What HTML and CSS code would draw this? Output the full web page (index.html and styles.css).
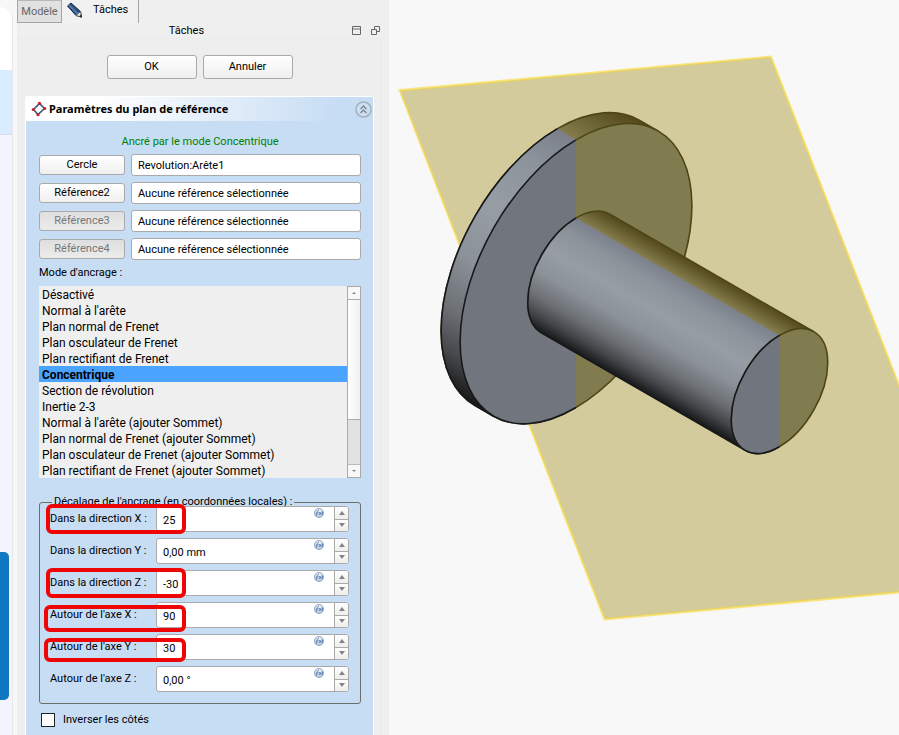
FILE: index.html
```html
<!DOCTYPE html>
<html lang="fr">
<head>
<meta charset="utf-8">
<title>Tâches</title>
<link rel="stylesheet" href="styles.css">
</head>
<body>
<svg class="defs" width="0" height="0" aria-hidden="true">
  <defs>
    <radialGradient id="fxFill" cx=".5" cy=".3" r=".7"><stop offset="0" stop-color="#eef3f8"/><stop offset="1" stop-color="#b4c6da"/></radialGradient>
    <symbol id="fx" viewBox="0 0 10 10">
      <circle cx="5" cy="5" r="4.5" fill="url(#fxFill)" stroke="#8fa5bf" stroke-width="1"/>
      <path d="M2 8 3.6 3.2Q4 2.2 4.8 2.6M2.6 5H4.4M5 4 7.4 7M7.4 4 5 7M8.3 3.5V7" fill="none" stroke="#4a78ae" stroke-width=".9"/>
    </symbol>
  </defs>
</svg>
<div class="app">
  <aside class="backdrop">
    <div class="backdrop-page"><div class="band"></div></div>
    <div class="backdrop-thumb"></div>
  </aside>

  <section class="dock">
    <nav class="tabs">
      <button class="tab" type="button">Modèle</button>
      <button class="tab active" type="button">
        <svg width="18" height="17" viewBox="0 0 18 17" aria-hidden="true">
          <path d="M1.5 4 5 1 14.5 9.5 15.5 15 10 13.500Z" fill="#2f4f7d" stroke="#16294a" stroke-width="1"/>
          <path d="M3 3 12 12" stroke="#5c80b4" stroke-width="1.500"/>
          <path d="M10 13.500 14.500 9.500 15.500 15Z" fill="#e9e4da" stroke="#4b5564" stroke-width=".7"/>
          <path d="M13.300 14.400 15 12.500 15.800 15.400Z" fill="#111"/>
        </svg>
        Tâches
      </button>
    </nav>
    <header class="dock-title">
      <h1>Tâches</h1>
      <div class="dock-tools">
        <button type="button" aria-label="Réduire"><svg width="9" height="9" viewBox="0 0 9 9"><path d="M.5.5h8v8h-8zM0 3h9" fill="none" stroke="#666"/></svg></button>
        <button type="button" aria-label="Détacher"><svg width="9" height="9" viewBox="0 0 9 9"><path d="M3.500 3V.5h5v5H6M.5 3.500h5v5h-5z" fill="none" stroke="#666"/></svg></button>
      </div>
    </header>

    <div class="dock-body">
      <div class="actions">
        <button class="btn" type="button">OK</button>
        <button class="btn" type="button">Annuler</button>
      </div>

      <section class="card">
        <header class="card-head">
          <svg width="16" height="16" viewBox="0 0 16 16" aria-hidden="true">
            <path d="M8.500 2.500 13.500 7.500 7 13.500 2.500 8.500Z" fill="#fff" stroke="#3c5a85" stroke-width="1.600"/>
            <g fill="#cc1f1f"><circle cx="8.500" cy="2.300" r="1.600"/><circle cx="13.700" cy="7.500" r="1.600"/><circle cx="7" cy="13.700" r="1.600"/><circle cx="2.300" cy="8.500" r="1.600"/></g>
          </svg>
          <h2>Paramètres du plan de référence</h2>
          <button class="collapse" type="button" aria-label="Replier">
            <svg width="17" height="17" viewBox="0 0 17 17"><circle cx="8.500" cy="8.500" r="7.600" fill="#ccdff2" stroke="#a7b1bd" stroke-width="1.500"/><path d="M5.500 8 8.500 5 11.500 8M5.500 12 8.500 9 11.500 12" fill="none" stroke="#7d8792" stroke-width="1.400"/></svg>
          </button>
        </header>

        <form class="card-body">
          <p class="status">Ancré par le mode Concentrique</p>
          <div class="refs">
            <button class="btn" type="button">Cercle</button>
            <input type="text" aria-label="Cercle" value="Revolution:Arête1">
            <button class="btn" type="button">Référence2</button>
            <input type="text" aria-label="Référence2" value="Aucune référence sélectionnée">
            <button class="btn" type="button" disabled>Référence3</button>
            <input type="text" aria-label="Référence3" value="Aucune référence sélectionnée">
            <button class="btn" type="button" disabled>Référence4</button>
            <input type="text" aria-label="Référence4" value="Aucune référence sélectionnée">
          </div>

          <p class="caption" id="mode">Mode d'ancrage :</p>
          <div class="list">
            <ul role="listbox" aria-labelledby="mode">
              <li role="option">Désactivé</li>
              <li role="option">Normal à l'arête</li>
              <li role="option">Plan normal de Frenet</li>
              <li role="option">Plan osculateur de Frenet</li>
              <li role="option">Plan rectifiant de Frenet</li>
              <li role="option" aria-selected="true">Concentrique</li>
              <li role="option">Section de révolution</li>
              <li role="option">Inertie 2-3</li>
              <li role="option">Normal à l'arête (ajouter Sommet)</li>
              <li role="option">Plan normal de Frenet (ajouter Sommet)</li>
              <li role="option">Plan osculateur de Frenet (ajouter Sommet)</li>
              <li role="option">Plan rectifiant de Frenet (ajouter Sommet)</li>
            </ul>
            <div class="scroll">
              <span class="scroll-end"><i class="up"></i></span>
              <span class="scroll-thumb"></span>
              <span class="scroll-end bottom"><i class="down"></i></span>
            </div>
          </div>

          <fieldset>
            <legend>Décalage de l'ancrage (en coordonnées locales) :</legend>
            <div class="field marked">
              <label for="dx">Dans la direction X :</label>
              <div class="spin"><input id="dx" type="text" value="25"><svg width="10" height="10"><use href="#fx"/></svg><span class="steps"><button type="button" aria-label="Plus"><i class="up"></i></button><button type="button" aria-label="Moins"><i class="down"></i></button></span></div>
            </div>
            <div class="field">
              <label for="dy">Dans la direction Y :</label>
              <div class="spin"><input id="dy" type="text" value="0,00 mm"><svg width="10" height="10"><use href="#fx"/></svg><span class="steps"><button type="button" aria-label="Plus"><i class="up"></i></button><button type="button" aria-label="Moins"><i class="down"></i></button></span></div>
            </div>
            <div class="field marked">
              <label for="dz">Dans la direction Z :</label>
              <div class="spin"><input id="dz" type="text" value="-30"><svg width="10" height="10"><use href="#fx"/></svg><span class="steps"><button type="button" aria-label="Plus"><i class="up"></i></button><button type="button" aria-label="Moins"><i class="down"></i></button></span></div>
            </div>
            <div class="field marked low">
              <label for="ax">Autour de l'axe X :</label>
              <div class="spin"><input id="ax" type="text" value="90"><svg width="10" height="10"><use href="#fx"/></svg><span class="steps"><button type="button" aria-label="Plus"><i class="up"></i></button><button type="button" aria-label="Moins"><i class="down"></i></button></span></div>
            </div>
            <div class="field marked low short">
              <label for="ay">Autour de l'axe Y :</label>
              <div class="spin"><input id="ay" type="text" value="30"><svg width="10" height="10"><use href="#fx"/></svg><span class="steps"><button type="button" aria-label="Plus"><i class="up"></i></button><button type="button" aria-label="Moins"><i class="down"></i></button></span></div>
            </div>
            <div class="field">
              <label for="az">Autour de l'axe Z :</label>
              <div class="spin"><input id="az" type="text" value="0,00 °"><svg width="10" height="10"><use href="#fx"/></svg><span class="steps"><button type="button" aria-label="Plus"><i class="up"></i></button><button type="button" aria-label="Moins"><i class="down"></i></button></span></div>
            </div>
          </fieldset>

          <label class="check"><input type="checkbox">Inverser les côtés</label>
        </form>
      </section>
    </div>
  </section>

  <main class="view">
    <svg viewBox="389 0 510 735" preserveAspectRatio="xMinYMin slice" role="img" aria-label="Vue 3D">
      <defs>
        <linearGradient id="steelShaft" gradientUnits="userSpaceOnUse" x1="610.3" y1="214.4" x2="542.1" y2="333.200">
          <stop offset="0" stop-color="#45484e"/><stop offset=".147" stop-color="#7b808a"/><stop offset=".27" stop-color="#8c939b"/><stop offset=".45" stop-color="#969da5"/><stop offset=".62" stop-color="#8c9299"/><stop offset=".78" stop-color="#6d7176"/><stop offset=".9" stop-color="#45474a"/><stop offset="1" stop-color="#17181a"/>
        </linearGradient>
        <linearGradient id="steelRim" gradientUnits="userSpaceOnUse" x1="658.3" y1="131.100" x2="494.5" y2="416.400">
          <stop offset="0" stop-color="#45484e"/><stop offset=".147" stop-color="#7b808a"/><stop offset=".27" stop-color="#8c939b"/><stop offset=".45" stop-color="#969da5"/><stop offset=".62" stop-color="#8c9299"/><stop offset=".78" stop-color="#6d7176"/><stop offset=".9" stop-color="#45474a"/><stop offset="1" stop-color="#17181a"/>
        </linearGradient>
        <linearGradient id="oliveShaft" gradientUnits="userSpaceOnUse" x1="610.3" y1="214.4" x2="542.1" y2="333.200">
          <stop offset="0" stop-color="#52481a"/><stop offset=".147" stop-color="#847c4d"/>
        </linearGradient>
        <linearGradient id="oliveRim" gradientUnits="userSpaceOnUse" x1="658.3" y1="131.100" x2="494.5" y2="416.400">
          <stop offset="0" stop-color="#52481a"/><stop offset=".147" stop-color="#847c4d"/>
        </linearGradient>
        <clipPath id="frontDisk"><path d="M389 0H557V128.500L576 139.800V735H389Z"/></clipPath>
        <clipPath id="frontShaft"><path d="M389 0H576V218L779.500 335.300V735H389Z"/></clipPath>
        <clipPath id="frontFace"><path d="M389 0H779.500V735H389Z"/></clipPath>
        <path id="rim" d="M658.300 131.100 639.300 120.200A164.600 94.200 -60 0 0 474.700 405.300L493.700 416.300"/>
        <ellipse id="disk" rx="164.600" ry="94.200" transform="translate(576 273.700) rotate(-60)"/>
        <path id="shaft" d="M610.300 214.400 813.800 331.700 745.200 450.300 541.700 333A68.500 39.200 -60 0 1 610.300 214.400Z"/>
        <path id="root" d="M541.700 333A68.500 39.200 -60 0 1 610.300 214.400"/>
        <ellipse id="face" rx="68.500" ry="39.200" transform="translate(779.500 391) rotate(-60)"/>
      </defs>
      <path d="M399.500 90 771 56.500 977 585.500 604.500 619.500Z" fill="#d3cb9b" stroke="#f9e47e" stroke-width="2"/>
      <path d="M400.500 91 770.500 57.500 976 584.500 605 618.500Z" fill="none" stroke="#e8d35d"/>
      <g stroke="#4e4516" stroke-width="1.600">
        <use href="#rim" fill="url(#oliveRim)"/>
        <use href="#disk" fill="#817b50"/>
      </g>
      <g clip-path="url(#frontDisk)" stroke="#17181a" stroke-width="1.600">
        <use href="#rim" fill="url(#steelRim)"/>
        <use href="#disk" fill="#71757d"/>
      </g>
      <use href="#shaft" fill="url(#oliveShaft)"/>
      <path d="M610.300 214.400 813.800 331.700" stroke="#4e4516" stroke-width="1.500"/>
      <use href="#root" fill="none" stroke="#4e4516" stroke-width="1.600"/>
      <g clip-path="url(#frontShaft)">
        <use href="#shaft" fill="url(#steelShaft)"/>
        <path d="M541.700 333 745.200 450.300" stroke="#17181a" stroke-width="1.500"/>
        <use href="#root" fill="none" stroke="#17181a" stroke-width="1.600"/>
      </g>
      <use href="#face" fill="#817b50" stroke="#4e4516" stroke-width="1.600"/>
      <g clip-path="url(#frontFace)"><use href="#face" fill="#71757d" stroke="#17181a" stroke-width="1.600"/></g>
    </svg>
  </main>
</div>
</body>
</html>
```
FILE: styles.css
```css
*, *::after { box-sizing: border-box; }
body { margin: 0; background: #f8f8f8; color: #000; font: 11px/16px Roboto, "Noto Sans", sans-serif; }
h1, h2, p, ul { margin: 0; padding: 0; font-size: 11px; font-weight: 400; }
button, input { font: inherit; color: inherit; margin: 0; padding: 0; }
svg { display: block; flex: none; }
.defs { position: absolute; }

.app { display: flex; height: 100vh; overflow: hidden; }

.backdrop { position: relative; flex: 0 0 17px; background: #f7f7f7; }
.backdrop-page { width: 13px; height: 100%; padding-top: 63px; margin-top: 7px; background: linear-gradient(#fff 63px, #f4f4fe 63px); border-right: 1px solid #e9e9ec; border-radius: 0 12px 0 0; }
.band { height: 65px; background: #d9ebff; border-bottom: 1px solid #dcdce4; }
.backdrop-thumb { position: absolute; left: 0; top: 552px; width: 9px; height: 148px; background: #1177c1; border-radius: 0 5px 5px 0; }

.dock { flex: 0 0 372px; background: #efefef; }
.tabs { display: flex; height: 23px; }
.tab { border: 1px solid #a5a5a5; border-top-color: #b8b8b8; background: #e1e1e1; color: #666; width: 45px; }
.tab.active { display: flex; align-items: center; gap: 9px; width: 77px; padding: 0 0 3px 4px; border: 0; border-right: 1px solid #a5a5a5; background: #f1f1f1; color: #000; }
.dock-title { display: flex; align-items: center; height: 15px; padding-right: 9px; }
.dock-title h1 { flex: 1; text-align: center; padding-left: 4px; }
.dock-tools { display: flex; gap: 10px; }
.dock-tools button { border: 0; background: none; }
.dock-body { margin-right: 7px; padding: 16px 7px 0 8px; background: #eee; border-top: 1px solid #ececec; border-right: 1px solid #e9e9e9; }
.actions { display: flex; justify-content: center; gap: 6px; height: 24px; }
.actions .btn { width: 90px; }
.btn { border: 1px solid #aaa; border-radius: 3px; background: linear-gradient(#fff, #efefef); }
.btn:disabled { background: linear-gradient(#dfdfdf, #ebebeb); color: #777; }

.card { margin-top: 17px; border: 1px solid #fff; border-bottom: 0; border-radius: 3px 3px 0 0; background: #c7ddf4; }
.card-head { display: flex; align-items: center; gap: 2px; height: 24px; padding: 0 1px 0 5px; background: linear-gradient(90deg, #fff 20%, #c7ddf4 90%); }
.card-head h2 { flex: 1; font-family: "Noto Sans", sans-serif; font-weight: 700; }
.collapse { border: 0; background: none; }
.card-body { padding: 12px 12px 24px 13px; }
.status { text-align: center; color: #008000; line-height: 18px; }
.refs { display: grid; grid-template-columns: 86px 1fr; align-items: center; gap: 6px; margin-top: 3px; }
.refs .btn { height: 20px; }
.refs input { height: 22px; min-width: 0; width: 100%; border: 1px solid #aaa; border-radius: 3px; padding: 1px 6px 0; background: #fff; }
.caption { margin-top: 5px; }

.list { display: flex; margin-top: 5px; background: #efefef; }
.list ul { flex: 1; min-width: 0; list-style: none; font-size: 12px; line-height: 18px; }
.list li { height: 16px; padding-left: 3px; white-space: nowrap; }
.list li[aria-selected] { background: #4aa3ff; font-weight: 700; }
.scroll { display: flex; flex-direction: column; width: 14px; border: 1px solid #aaa; background: #e2e2e2; }
.scroll-end { display: flex; align-items: center; justify-content: center; height: 13px; background: #f8f8f8; border-bottom: 1px solid #aaa; }
.scroll-end.bottom { margin-top: auto; border-top: 1px solid #bbb; border-bottom: 0; }
.scroll-thumb { height: 120px; background: linear-gradient(90deg, #fff, #f1f1f1); border-bottom: 1px solid #aaa; }
.up, .down { display: block; width: 0; height: 0; border: 3px solid transparent; }
.up { border-top-width: 0; border-bottom-color: #858585; border-bottom-width: 4px; }
.down { border-bottom-width: 0; border-top-color: #858585; border-top-width: 4px; }
.scroll-end i { border-width: 2px; }
.scroll-end .up { border-top-width: 0; }
.scroll-end .down { border-bottom-width: 0; }

fieldset { margin: 18px 0 0; padding: 0 11px 11px 10px; min-width: 0; border: 1px solid #6d6d6d; border-radius: 3px; }
legend { padding: 0 2px; margin-left: 2px; height: 12px; line-height: 12px; white-space: nowrap; }
.field { position: relative; display: grid; grid-template-columns: 106px 1fr; margin-bottom: 6px; }
.field:first-of-type { margin-top: -2px; }
.field:last-child { margin-bottom: 0; }
.field label { line-height: 26px; white-space: nowrap; }
.spin { display: flex; height: 26px; border: 1px solid #aaa; border-radius: 3px; background: #fff; overflow: hidden; }
.spin input { flex: 1; min-width: 0; border: 0; background: none; padding: 3px 0 0 6px; outline: 0; }
.spin svg { margin: 1px 10px 0 0; }
.steps { display: flex; flex-direction: column; width: 14px; border-left: 1px solid #aaa; }
.steps button { flex: 1; display: flex; align-items: center; justify-content: center; border: 0; background: linear-gradient(#fff, #eee); }
.steps button + button { border-top: 1px solid #aaa; }
.marked::after { content: ""; position: absolute; z-index: 1; left: -4px; top: -2px; width: 140px; height: 30px; border: 4px solid #ee0505; border-radius: 6px; pointer-events: none; }
.marked.low::after { left: -6px; top: 3px; width: 142px; height: 27px; }
.marked.low.short::after { top: 4px; height: 24px; }

.check { display: flex; align-items: center; gap: 8px; margin: 8px 0 0 2px; }
.check input { appearance: none; width: 14px; height: 14px; border: 1px solid #222; background: #fff; }

.view { flex: 1; min-width: 0; background: #f8f8f8; }
.view svg { width: 100%; height: 100%; }
```
